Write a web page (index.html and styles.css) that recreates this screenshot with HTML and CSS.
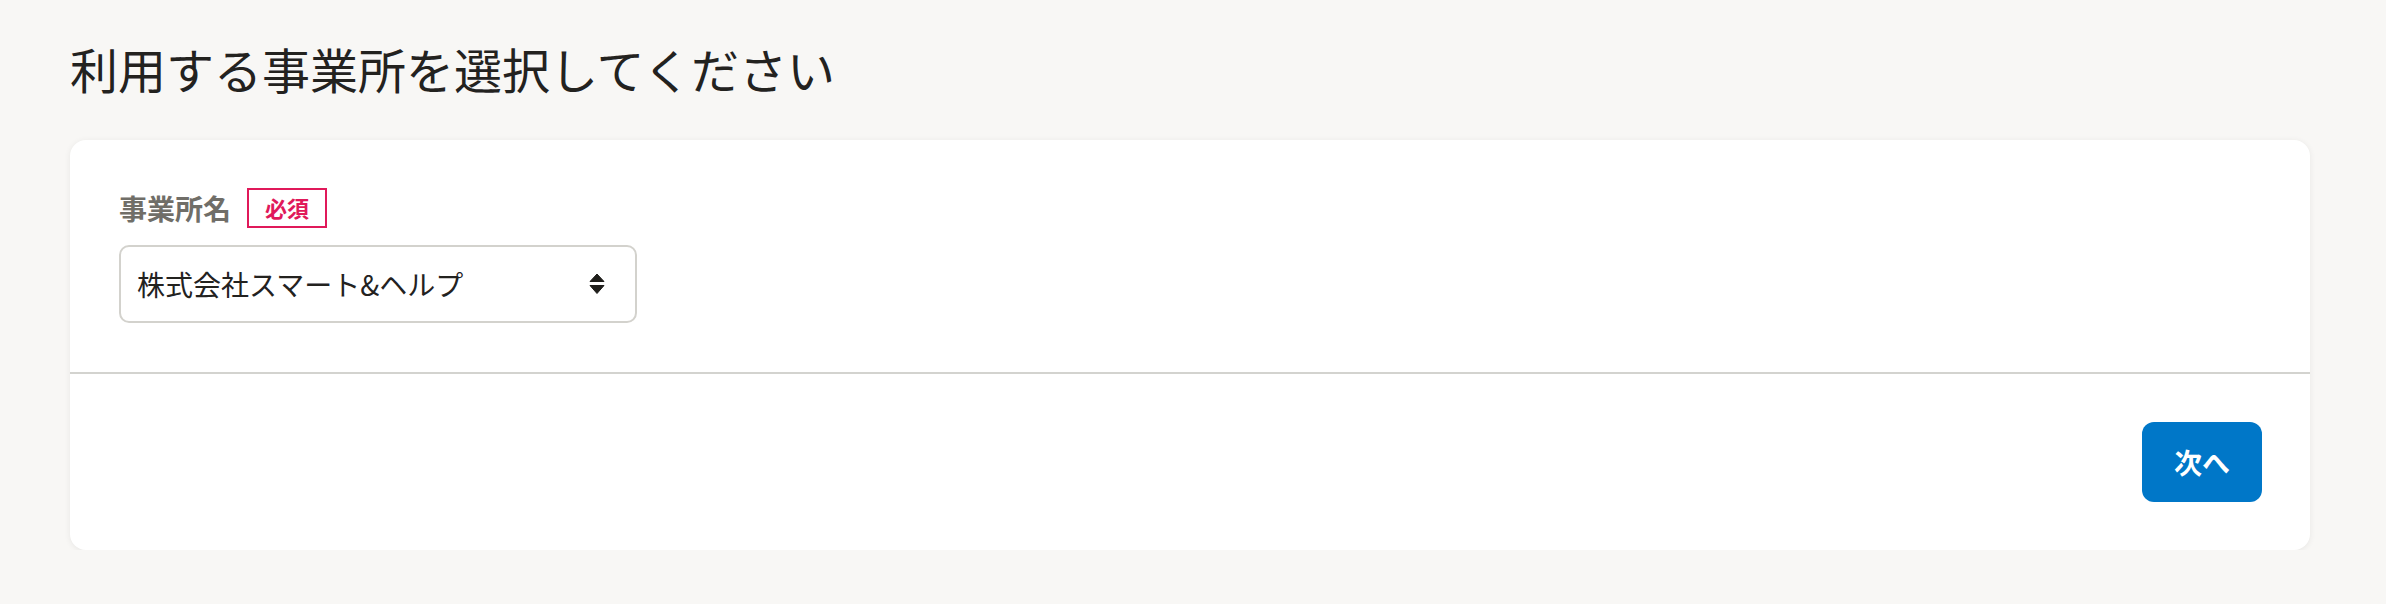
FILE: index.html
```html
<!DOCTYPE html>
<html lang="ja">
<head>
<meta charset="utf-8">
<title>事業所選択</title>
<link rel="stylesheet" href="styles.css">
</head>
<body>
<main class="page">
  <h1 class="title">利用する事業所を選択してください</h1>
  <section class="card">
    <div class="card-body">
      <div class="field-label">
        <span class="label-text">事業所名</span>
        <span class="badge">必須</span>
      </div>
      <div class="select">
        <span class="select-value">株式会社スマート&amp;ヘルプ</span>
        <svg class="select-icon" width="16" height="22" viewBox="0 0 16 22" aria-hidden="true">
          <path d="M8 1 L15 8.5 L1 8.5 Z" fill="#1f1e1b" stroke="#1f1e1b" stroke-width="1" stroke-linejoin="round"/>
          <path d="M1 12.5 L15 12.5 L8 20.5 Z" fill="#1f1e1b" stroke="#1f1e1b" stroke-width="1" stroke-linejoin="round"/>
        </svg>
      </div>
    </div>
    <div class="card-footer">
      <button class="btn-primary" type="button">次へ</button>
    </div>
  </section>
</main>
</body>
</html>
```

FILE: styles.css
```css
html, body {
  margin: 0;
  padding: 0;
  background: #f8f7f5;
}

body {
  font-family: "Noto Sans CJK JP", "Noto Sans", sans-serif;
  color: #23221f;
}

.page {
  padding: 32px 76px 0 70px;
}

.title {
  margin: 0;
  font-size: 48px;
  font-weight: 400;
  line-height: 72px;
  color: #23221f;
}

.card {
  margin-top: 36px;
  background: #ffffff;
  border-radius: 16px;
  box-shadow: 0 1px 6px rgba(0, 0, 0, 0.07);
}

.card-body {
  padding: 48px 48px 49px 49px;
  border-bottom: 2px solid #d3d3cf;
}

.field-label {
  display: flex;
  align-items: center;
  gap: 16px;
  height: 40px;
}

.label-text {
  font-size: 28px;
  font-weight: 700;
  color: #706e68;
  line-height: 40px;
}

.badge {
  box-sizing: border-box;
  height: 40px;
  padding: 0 16px;
  border: 2px solid #e0195a;
  color: #e0195a;
  font-size: 22px;
  font-weight: 700;
  line-height: 35px;
}

.select {
  box-sizing: border-box;
  margin-top: 17px;
  width: 518px;
  height: 78px;
  border: 2px solid #d3d2cd;
  border-radius: 10px;
  background: #ffffff;
  display: flex;
  align-items: center;
  justify-content: space-between;
  padding: 0 30px 0 16px;
}

.select-value {
  font-size: 28px;
  line-height: 40px;
  color: #23221f;
}

.select-icon {
  display: block;
}

.card-footer {
  padding: 48px;
  display: flex;
  justify-content: flex-end;
}

.btn-primary {
  width: 120px;
  height: 80px;
  border: none;
  border-radius: 12px;
  background: #0077c8;
  color: #ffffff;
  font-family: "Noto Sans CJK JP", "Noto Sans", sans-serif;
  font-size: 28px;
  font-weight: 700;
  padding: 0;
  cursor: pointer;
}
```
